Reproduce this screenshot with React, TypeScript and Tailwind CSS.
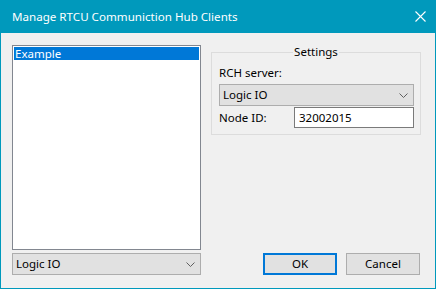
import React from "react";

const Chevron = () => (
  <svg width="9" height="5" viewBox="0 0 9 5" className="shrink-0">
    <path d="M0.5 0.5 L4.5 4.5 L8.5 0.5" fill="none" stroke="#606060" strokeWidth="1" />
  </svg>
);

export default function App() {
  return (
    <div
      className="w-[436px] h-[289px] bg-[#0099bc] flex flex-col text-[11.5px] text-black"
      style={{ fontFamily: '"Noto Sans", "Segoe UI", sans-serif' }}
    >
      <div className="h-[33px] flex items-center pl-[12px] pr-[10px] text-white shrink-0">
        <span className="flex-1 leading-none text-[11.6px]">Manage RTCU Communiction Hub Clients</span>
        <svg width="11" height="11" viewBox="0 0 11 11">
          <path d="M0.5 0.5 L10.5 10.5 M10.5 0.5 L0.5 10.5" stroke="white" strokeWidth="1.1" />
        </svg>
      </div>
      <div className="flex-1 mx-[1px] mb-[1px] bg-[#f0f0f0] flex pt-[12px] pl-[11px] pb-[13px]">
        <div className="w-[189px] flex flex-col">
          <div className="h-[205px] bg-white border border-[#828790] p-[1px]">
            <div className="h-[13px] bg-[#0078d7] text-white leading-[13px] pl-[1px]">Example</div>
          </div>
          <div className="mt-[3px] h-[22px] bg-[#e1e1e1] border border-[#adadad] flex items-center pl-[3px] pr-[5px]">
            <span className="flex-1 leading-none">Logic IO</span>
            <Chevron />
          </div>
        </div>
        <div className="ml-[10px] w-[210px] flex flex-col">
          <div className="relative mt-[7px] border border-[#dcdcdc] pt-[12px] pl-[7px] pr-[6px] pb-[6px]">
            <span className="absolute left-0 right-0 -top-[9px] flex justify-center">
              <span className="bg-[#f0f0f0] px-[1px] leading-[16px]">Settings</span>
            </span>
            <div className="leading-[16px]">RCH server:</div>
            <div className="mt-[3px] h-[22px] bg-[#e1e1e1] border border-[#adadad] flex items-center pl-[3px] pr-[5px]">
              <span className="flex-1 leading-none">Logic IO</span>
              <Chevron />
            </div>
            <div className="mt-[1px] flex items-center">
              <span className="w-[75px] leading-none">Node ID:</span>
              <div className="w-[120px] h-[21px] bg-white border border-[#7a7a7a] flex items-center pl-[4px] leading-none">
                32002015
              </div>
            </div>
          </div>
          <div className="mt-auto flex justify-end gap-[9px] pr-[1px]">
            <div className="w-[74px] h-[22px] bg-[#e1e1e1] border-2 border-[#0078d7] flex items-center justify-center leading-none">
              OK
            </div>
            <div className="w-[74px] h-[22px] bg-[#e1e1e1] border border-[#adadad] flex items-center justify-center leading-none">
              Cancel
            </div>
          </div>
        </div>
      </div>
    </div>
  );
}
